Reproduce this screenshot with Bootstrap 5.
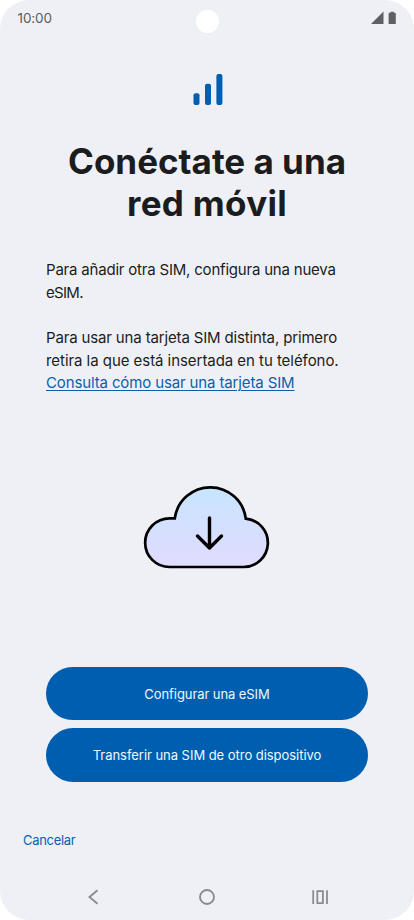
<!DOCTYPE html>
<html lang="es">
<head>
<meta charset="utf-8">
<meta name="viewport" content="width=device-width, initial-scale=1">
<title>Conéctate a una red móvil</title>
<link href="https://cdn.jsdelivr.net/npm/bootstrap@5.3.0/dist/css/bootstrap.min.css" rel="stylesheet">
<style>
body{background:#fff;font-family:Inter,"Liberation Sans",sans-serif;color:#1b1c20}
svg{display:block}
.phone{width:414px;height:920px;border-radius:29px;background:#eff0f6}
.status{height:37px;padding:0 17px 0 17.5px;color:#5b5b60}
.clock{font-size:13.5px;letter-spacing:-.1px;line-height:37px}
.camera{width:23px;height:23px;left:195.5px;top:9.5px}
.signal{margin-top:36px;margin-left:193px}
.headline{font-size:35px;line-height:42px;font-weight:700;margin-top:34.5px}
.headline .wide{letter-spacing:.3px}
.copy{margin:35.3px 46px 0;font-size:15px;line-height:22.7px}
.copy span,.copy a{white-space:nowrap}
.copy a{color:#0b5fae;text-underline-offset:2px;text-decoration-thickness:1px;letter-spacing:-.13px}
.t1{letter-spacing:-.2px}
.t2{letter-spacing:-.7px}
.t3{letter-spacing:-.15px}
.t4{letter-spacing:-.05px}
.cloud{margin-top:88.7px}
.actions{margin:97px 46px 0;gap:8px}
.action{--bs-btn-bg:#005eb1;--bs-btn-color:#eef8ff;--bs-btn-hover-bg:#004f96;--bs-btn-hover-color:#fff;height:53.5px;font-size:13px;border:0;padding-top:8px;letter-spacing:-.08px}
.action.long{letter-spacing:-.04px}
.cancel{margin:48px 0 0 23px;font-size:13px;line-height:20px;color:#0b5fae;letter-spacing:-.3px}
.keys{height:46px;padding:0 84px}
</style>
</head>
<body>
<main class="phone position-relative d-flex flex-column overflow-hidden">
  <header class="status d-flex justify-content-between">
    <span class="clock">10:00</span>
    <svg width="27" height="37" viewBox="0 0 27 37" fill="#606064"><path d="M1 24L13.5 11.5V24Z"/><path d="M18.6 13.6Q18.6 12.7 19.5 12.7H20.6V11.7H23.8V12.7H24.9Q25.8 12.7 25.8 13.6V24H18.6Z"/></svg>
  </header>
  <div class="camera position-absolute rounded-circle bg-white"></div>
  <svg class="signal" width="30" height="32" viewBox="0 0 30 32" fill="#005eb1"><rect x=".5" y="20.2" width="6" height="11.8" rx="2"/><rect x="12" y="10.7" width="6" height="21.3" rx="2"/><rect x="23.4" y="1" width="6" height="31" rx="2"/></svg>
  <h1 class="headline text-center mb-0"><span>Conéctate a una</span><br><span class="wide">red móvil</span></h1>
  <div class="copy">
    <span class="t1">Para añadir otra SIM, configura una nueva</span><br><span class="t2">eSIM.</span><br><br>
    <span class="t3">Para usar una tarjeta SIM distinta, primero</span><br>
    <span class="t4">retira la que está insertada en tu teléfono.</span><br>
    <a href="#">Consulta cómo usar una tarjeta SIM</a>
  </div>
  <svg class="cloud mx-auto" width="128" height="86" viewBox="143 484 128 86" fill="none" stroke="#000" stroke-width="2.7">
    <defs><linearGradient id="sky" x1="0" y1="0" x2="0" y2="1"><stop offset="0" stop-color="#c7e5ff"/><stop offset=".9" stop-color="#dedcff"/></linearGradient></defs>
    <path fill="url(#sky)" d="M169.5 567H243.2A24.2 24.2 0 0 0 245.8 518.7A35.8 35.8 0 0 0 174.8 518.3H169.5A24.3 24.3 0 0 0 169.5 567Z"/>
    <path stroke-width="3.4" stroke-linecap="round" stroke-linejoin="round" d="M209.5 518V548M197.5 536L209.5 548L221.5 536"/>
  </svg>
  <div class="actions d-flex flex-column">
    <button class="btn action rounded-pill">Configurar una eSIM</button>
    <button class="btn action long rounded-pill">Transferir una SIM de otro dispositivo</button>
  </div>
  <a class="cancel align-self-start text-decoration-none" href="#">Cancelar</a>
  <nav class="keys d-flex justify-content-between align-items-center mt-auto">
    <svg width="18" height="18" viewBox="0 0 18 18" fill="none" stroke="#8b8b90" stroke-width="1.9"><path d="M13.5 2.3L5.5 9L13.5 15.7"/></svg>
    <svg width="18" height="18" viewBox="0 0 18 18" fill="none" stroke="#8b8b90" stroke-width="1.9"><circle cx="9" cy="9" r="7"/></svg>
    <svg width="18" height="18" viewBox="0 0 18 18" fill="none" stroke="#8b8b90" stroke-width="1.8"><path d="M1.2 2.2V16M15 2.2V16M5.3 3.1H10.9V15.1H5.3Z"/></svg>
  </nav>
</main>
<script src="https://cdn.jsdelivr.net/npm/bootstrap@5.3.0/dist/js/bootstrap.bundle.min.js"></script>
</body>
</html>
